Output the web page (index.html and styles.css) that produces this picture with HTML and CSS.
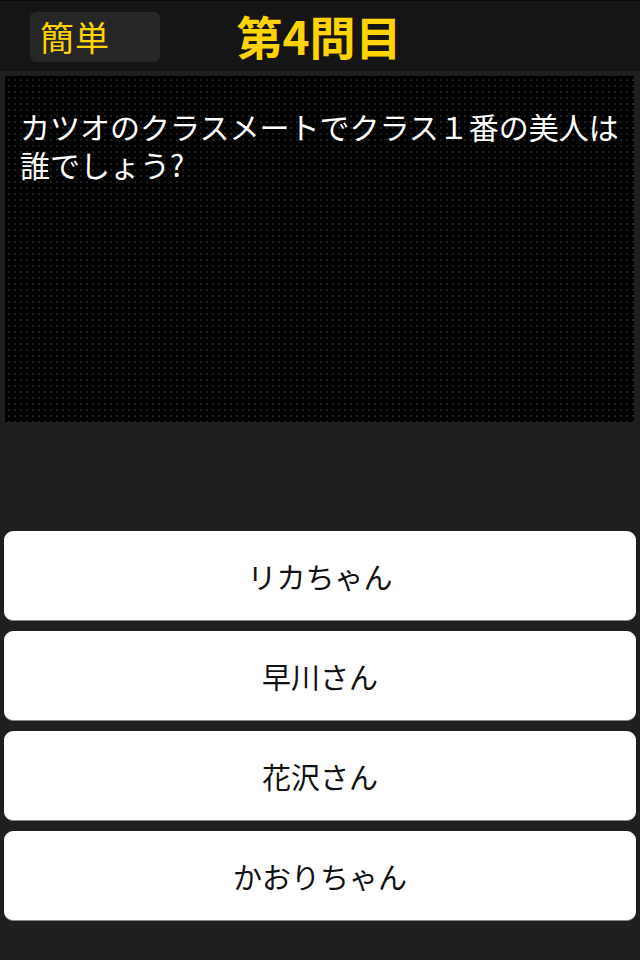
FILE: index.html
```html
<!DOCTYPE html>
<html lang="ja">
<head>
<meta charset="utf-8">
<link rel="stylesheet" href="styles.css">
</head>
<body>
<div class="app">
  <header class="header">
    <div class="level">簡単</div>
    <div class="title">第4問目</div>
  </header>
  <section class="question">
    <p class="question-text">カツオのクラスメートでクラス１番の美人は誰でしょう?</p>
  </section>
  <div class="answers">
    <button class="answer">リカちゃん</button>
    <button class="answer">早川さん</button>
    <button class="answer">花沢さん</button>
    <button class="answer">かおりちゃん</button>
  </div>
</div>
</body>
</html>
```
FILE: styles.css
```css
* { box-sizing: border-box; }
html, body {
  margin: 0;
  padding: 0;
  background: #1f1f1f;
}
body {
  font-family: "Noto Sans CJK JP", "Noto Sans", sans-serif;
  width: 640px;
  height: 960px;
  overflow: hidden;
}
.app {
  display: flex;
  flex-direction: column;
}
.header {
  position: relative;
  height: 71px;
  background: #151515;
  border-top: 1px solid #0b0b0b;
  display: flex;
  align-items: center;
  justify-content: center;
}
.level {
  position: absolute;
  left: 30px;
  top: 11px;
  width: 130px;
  height: 50px;
  background: #262626;
  border-radius: 6px;
  color: #ffd400;
  font-size: 34px;
  line-height: 50px;
  padding-left: 10px;
  letter-spacing: 1px;
}
.title {
  color: #ffd400;
  font-size: 46px;
  font-weight: bold;
  line-height: 1;
  margin-left: -2px;
  margin-top: -3px;
}
.question {
  margin: 5px 6px 0 5px;
  height: 346px;
  background-color: #000;
  background-image: radial-gradient(circle, #1e1e1e 1px, transparent 1.3px);
  background-size: 6px 6px;
  background-position: 1px 1px;
  padding: 31px 8px 0 15px;
}
.question-text {
  margin: 0;
  color: #fff;
  font-size: 30px;
  line-height: 38px;
}
.answers {
  margin: 109px 4px 0 4px;
  display: flex;
  flex-direction: column;
  gap: 10px;
}
.answer {
  height: 90px;
  background: #fff;
  border: none;
  border-bottom: 1px solid #8a8a8a;
  border-radius: 9px;
  font-family: inherit;
  font-size: 29px;
  color: #111;
  padding: 0;
}
```
